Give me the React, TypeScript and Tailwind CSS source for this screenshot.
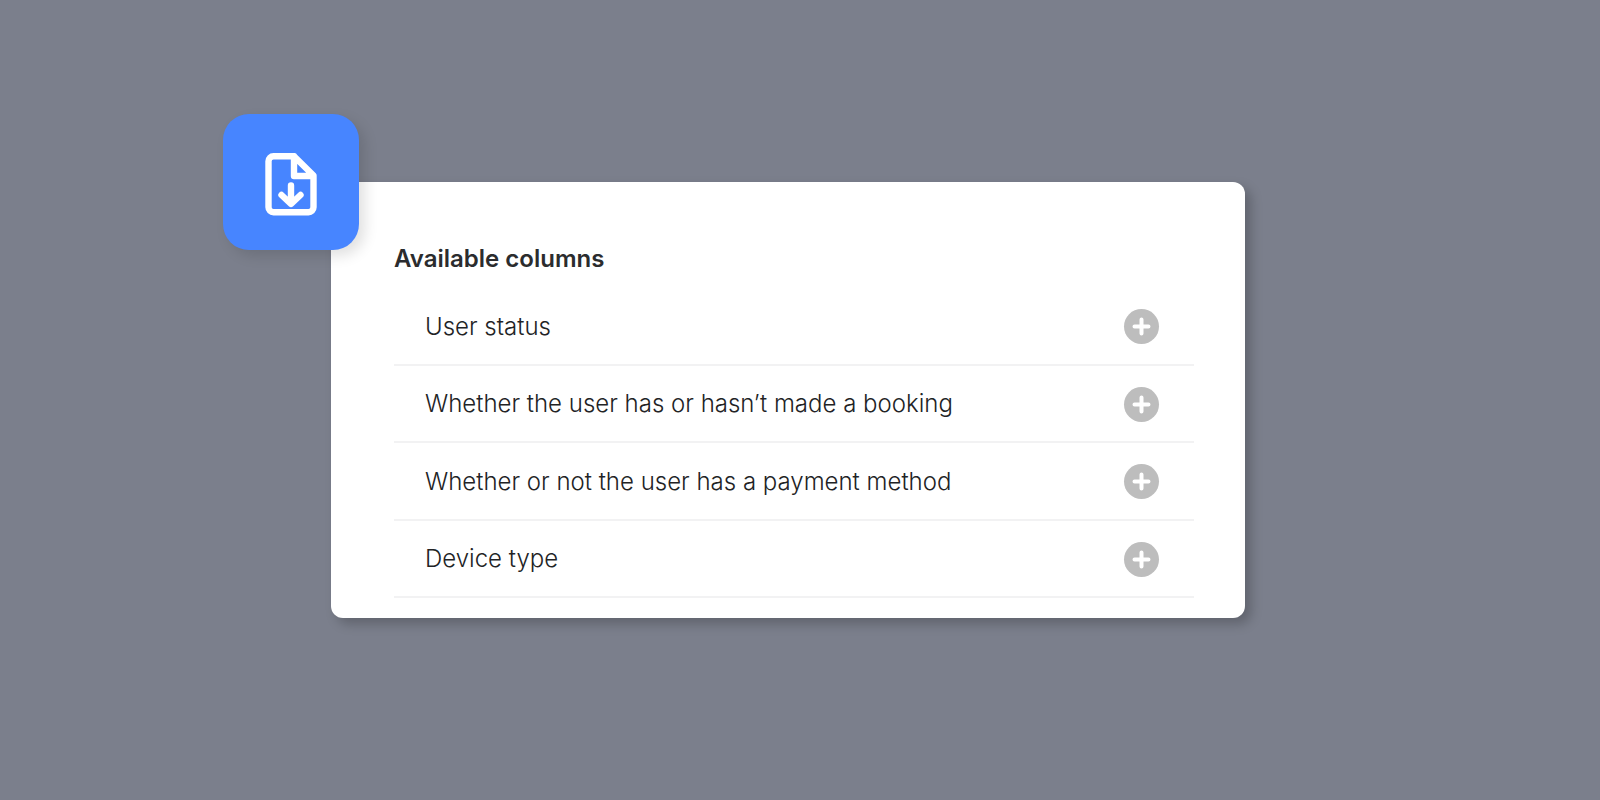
const columns = [
  "User status",
  "Whether the user has or hasn’t made a booking",
  "Whether or not the user has a payment method",
  "Device type",
];

function FileDownloadIcon() {
  return (
    <svg
      width="52"
      height="64"
      viewBox="0 0 52 64"
      fill="none"
      stroke="currentColor"
      strokeWidth="6.4"
      strokeLinecap="round"
      strokeLinejoin="round"
      aria-hidden="true"
    >
      <path d="M29 3.200H8.500a5 5 0 0 0-5 5v46a5 5 0 0 0 5 5h35a5 5 0 0 0 5-5V22.500L29 3.200V23h19" />
      <path d="M26 32.500v18M16.500 42l9.500 9 9.500-9" />
      <path d="M21 44.500h10l-5 6z" fill="currentColor" stroke="none" />
    </svg>
  );
}

function PlusIcon() {
  return (
    <svg
      width="35"
      height="35"
      viewBox="0 0 35 35"
      stroke="currentColor"
      strokeWidth="4"
      strokeLinecap="round"
      aria-hidden="true"
    >
      <path d="M17.500 10.500v14M10.500 17.500h14" />
    </svg>
  );
}

export default function App() {
  return (
    <main
      className="flex min-h-screen items-center justify-center bg-[#7b7f8c] pr-6 text-[#222325]"
      style={{ fontFamily: "Inter, 'Liberation Sans', sans-serif" }}
    >
      <section className="relative w-full max-w-[914px] rounded-xl bg-white pt-[61px] pr-[51px] pb-5 pl-[63px] shadow-[6px_6px_12px_rgba(0,0,0,0.22)]">
        {/* Badge */}
        <div className="absolute -top-[68px] -left-[108px] flex size-[136px] items-center justify-center rounded-[26px] bg-[#4785ff] pt-1.5 text-white shadow-[6px_6px_14px_rgba(0,0,0,0.12)]">
          <FileDownloadIcon />
        </div>

        <h2 className="mb-[13px] text-2xl/8 font-semibold text-[#2b2c2e]">Available columns</h2>

        <ul className="grid h-[310px] auto-rows-fr">
          {columns.map((column) => (
            <li
              key={column}
              className="flex items-center justify-between border-b-2 border-[#f2f2f3] pt-0.5 pr-[35px] pl-[31px]"
            >
              <span className="text-2xl/8 font-light">{column}</span>
              <button
                type="button"
                aria-label={`Add ${column}`}
                className="size-[35px] rounded-full bg-[#bdbdbd] text-white"
              >
                <PlusIcon />
              </button>
            </li>
          ))}
        </ul>
      </section>
    </main>
  );
}
